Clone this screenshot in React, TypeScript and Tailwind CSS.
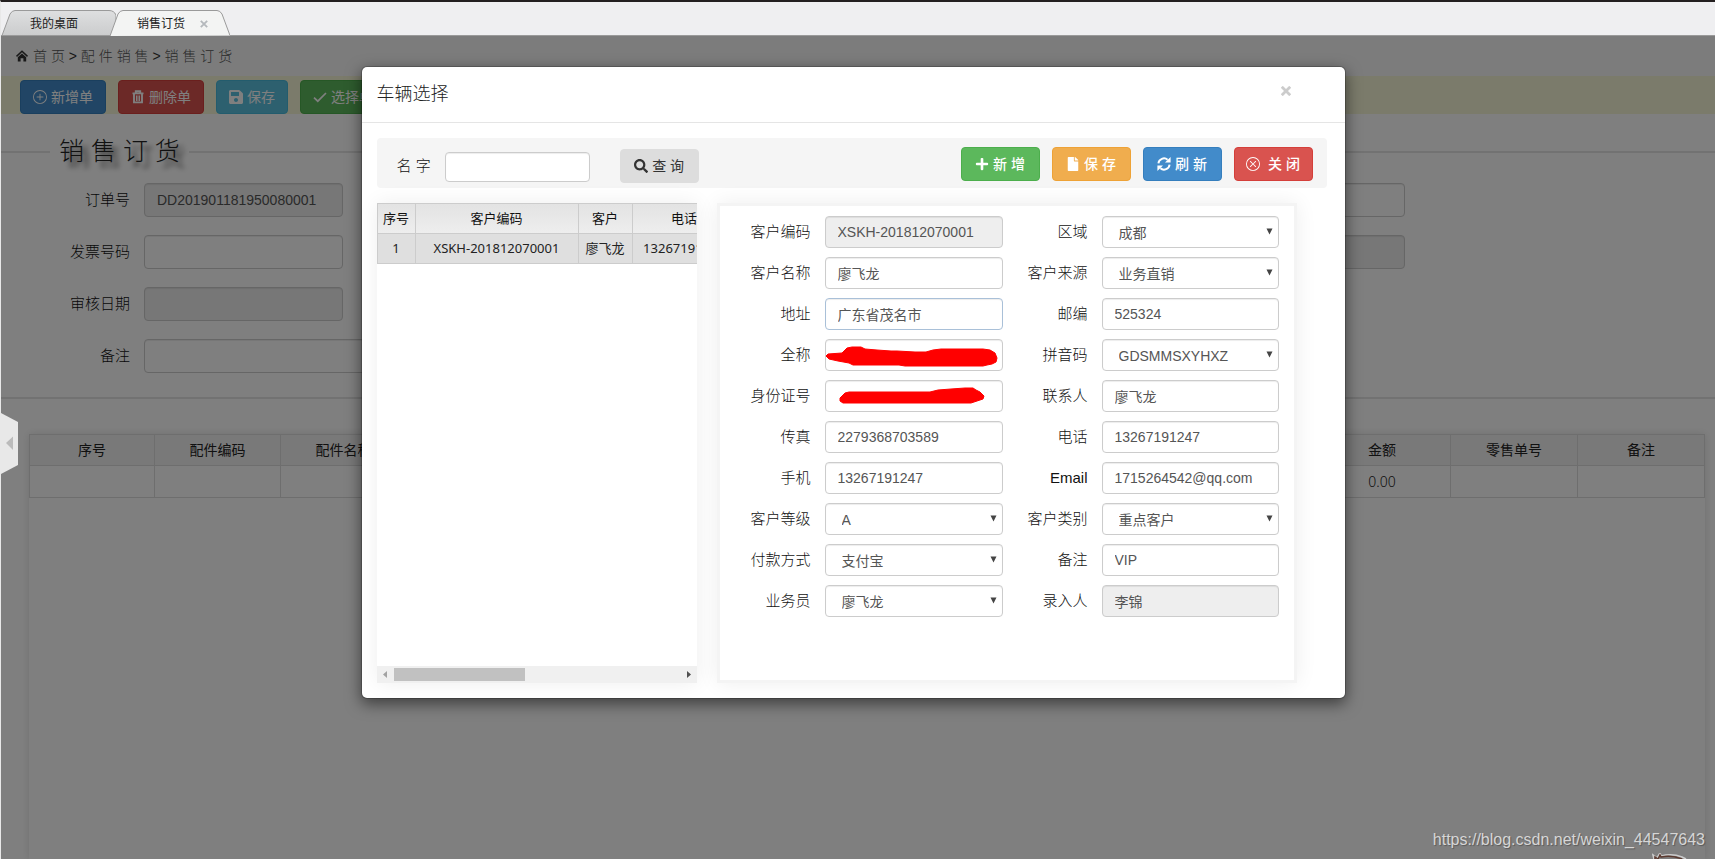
import { type ReactNode, useId } from "react";
import { BsPlusCircle, BsXCircle } from "react-icons/bs";
import { FaPlus, FaFile, FaSave, FaSearch } from "react-icons/fa";

type Field = {
  label: string;
  value: string;
  kind?: "select";
  readOnly?: boolean;
  active?: boolean;
  scribble?: string;
};

const LEFT_FIELDS: Field[] = [
  { label: "客户编码", value: "XSKH-201812070001", readOnly: true },
  { label: "客户名称", value: "廖飞龙" },
  { label: "地址", value: "广东省茂名市", active: true },
  {
    label: "全称",
    value: "",
    scribble:
      "M1 17 L3 15 L17 14 L22 9 L27 8 L36 8 L40 10 L52 11 L66 12 L72 12 L90 13 L101 13 L108 11 L116 10 L158 10 L165 11 L170 14 L172 19 L171 23 L167 25 L162 26 L158 27 L80 27 L74 26 L28 26 L24 24 L13 22 L4 20 Z",
  },
  {
    label: "身份证号",
    value: "",
    scribble:
      "M15 18 L20 13 L24 12 L105 12 L113 10 L126 9 L140 8 L148 8 L151 10 L155 12 L159 16 L158 19 L152 21 L146 23 L18 23 L15 21 Z",
  },
  { label: "传真", value: "2279368703589" },
  { label: "手机", value: "13267191247" },
  { label: "客户等级", value: "A", kind: "select" },
  { label: "付款方式", value: "支付宝", kind: "select" },
  { label: "业务员", value: "廖飞龙", kind: "select" },
];

const RIGHT_FIELDS: Field[] = [
  { label: "区域", value: "成都", kind: "select" },
  { label: "客户来源", value: "业务直销", kind: "select" },
  { label: "邮编", value: "525324" },
  { label: "拼音码", value: "GDSMMSXYHXZ", kind: "select" },
  { label: "联系人", value: "廖飞龙" },
  { label: "电话", value: "13267191247" },
  { label: "Email", value: "1715264542@qq.com" },
  { label: "客户类别", value: "重点客户", kind: "select" },
  { label: "备注", value: "VIP" },
  { label: "录入人", value: "李锦", readOnly: true },
];

function HomeIcon() {
  return (
    <svg viewBox="0 0 12 12" className="h-3 w-3 shrink-0" fill="currentColor" aria-hidden="true">
      <path d="M6 0.2 L12 5.8 L11 6.9 L6 2.3 L1 6.9 L0 5.8 Z" />
      <path d="M6 3.4 L10.2 7.2 V11.6 H7.4 V8.2 H4.6 V11.6 H1.8 V7.2 Z" />
    </svg>
  );
}

function TrashIcon() {
  return (
    <svg viewBox="0 0 14 14" className="h-3.5 w-3.5" fill="none" stroke="currentColor" aria-hidden="true">
      <path d="M1.5 3.4 H12.5 M4.8 3.2 V1.2 H9.2 V3.2 M3 4 V12.4 H11 V4" strokeWidth="1.9" />
      <path d="M5.5 5.5 V11 M7 5.5 V11 M8.5 5.5 V11" strokeWidth="1" />
    </svg>
  );
}

function CheckIcon() {
  return (
    <svg viewBox="0 0 14 14" className="h-3.5 w-3.5" fill="none" stroke="currentColor" strokeWidth="1.7" aria-hidden="true">
      <path d="M1 7.6 L4.8 11.2 L13 3" />
    </svg>
  );
}

function RefreshIcon() {
  return (
    <svg viewBox="0 0 14 14" className="h-3.5 w-3.5" aria-hidden="true">
      <path d="M1.4 6.4 A5.6 5.6 0 0 1 10.6 2.7 M12.6 7.6 A5.6 5.6 0 0 1 3.4 11.3" fill="none" stroke="currentColor" strokeWidth="1.9" />
      <path d="M13.6 0 V5.6 H8 Z M0.4 14 V8.4 H6 Z" fill="currentColor" />
    </svg>
  );
}

function Tabs() {
  return (
    <nav className="flex h-[34px] items-end border-b border-[#9a9a9a] bg-[#efeff1] text-xs font-normal text-[#222]">
      <a href="#desktop" className="relative flex h-[25px] w-[115px] items-center pl-[29px] pt-0.5">
        <svg viewBox="0 0 115 26" className="absolute left-0 top-0 h-[26px] w-[115px]" aria-hidden="true">
          <defs>
            <linearGradient id="tabIdle" x1="0" y1="0" x2="0" y2="1">
              <stop offset="0" stopColor="#dedfe0" />
              <stop offset="1" stopColor="#cbcccd" />
            </linearGradient>
          </defs>
          <path d="M1 25.5 L9 4 Q11 0.5 14 0.5 H108 Q113 0.5 115 5 V25.5 Z" fill="url(#tabIdle)" stroke="#9a9a9a" />
        </svg>
        <span className="relative">我的桌面</span>
      </a>
      <a href="#order" className="relative -ml-1.5 flex h-[25px] w-[120px] items-center gap-[15px] pl-[27px] pt-0.5">
        <svg viewBox="0 0 120 26" className="absolute left-0 top-0 h-[26px] w-[120px]" aria-hidden="true">
          <path d="M0 26 L8 4 Q10 0.5 13 0.5 H107 Q110 0.5 112 4 L120 25.5" fill="#f3f4f3" stroke="#9a9a9a" />
        </svg>
        <span className="relative">销售订货</span>
        <svg viewBox="0 0 8 8" className="relative h-2 w-2" stroke="#b4b8bc" strokeWidth="1.8" aria-hidden="true">
          <path d="M0.8 0.8 L7.2 7.2 M7.2 0.8 L0.8 7.2" />
        </svg>
      </a>
    </nav>
  );
}

function ToolButton({ className, icon, children }: { className: string; icon: ReactNode; children: ReactNode }) {
  return (
    <button type="button" className={`flex h-[34px] shrink-0 items-center gap-1 rounded border px-3 text-sm font-normal text-white ${className}`}>
      {icon}
      <span>{children}</span>
    </button>
  );
}

function OrderField({ label, value = "", readOnly = false, wide = false }: { label: string; value?: string; readOnly?: boolean; wide?: boolean }) {
  const id = useId();
  return (
    <div className={`flex items-center ${wide ? "col-span-2" : ""}`}>
      <label htmlFor={id} className="w-[129px] shrink-0 text-right text-[15px] text-[#111]">
        {label}
      </label>
      <input
        id={id}
        defaultValue={value}
        readOnly={readOnly}
        className={`ml-3.5 h-[34px] rounded border border-[#ccc] px-3 text-sm text-[#555] shadow-[inset_0_1px_1px_rgba(0,0,0,0.075)] ${wide ? "w-full" : "w-[199px]"} ${readOnly ? "bg-[#eee]" : "bg-white"}`}
      />
    </div>
  );
}

function OrderPage() {
  return (
    <div className="flex flex-1 flex-col bg-white">
      <div className="flex h-10 items-center gap-[5px] bg-[#f8f8f8] pl-[15px] text-sm text-[#333]">
        <HomeIcon />
        <span className="text-[#555]">
          首 页 <span className="text-[#333]">&gt;</span> 配 件 销 售 <span className="text-[#333]">&gt;</span> 销 售 订 货
        </span>
      </div>
      <div className="flex items-end gap-3 bg-[#f6f7d7] pl-[19px] pt-1">
        <ToolButton className="border-[#357ebd] bg-[#428bca]" icon={<BsPlusCircle size={14} />}>新增单</ToolButton>
        <ToolButton className="border-[#d43f3a] bg-[#d9534f]" icon={<TrashIcon />}>删除单</ToolButton>
        <ToolButton className="border-[#46b8da] bg-[#5bc0de]" icon={<FaSave size={16} className="-ml-px -mr-px" />}>保存</ToolButton>
        <ToolButton className="border-[#4cae4c] bg-[#5cb85c]" icon={<CheckIcon />}>选择单</ToolButton>
      </div>
      <div className="flex h-[69px] items-center pt-1.5">
        <div className="h-0.5 w-[49px] bg-[#e5e5e5]" />
        <h1 className="px-[9px] text-[25px] text-[#222] [text-shadow:6px_6px_5px_#555]">销 售 订 货</h1>
        <div className="h-0.5 flex-1 bg-[#e5e5e5]" />
      </div>
      <div className="grid grid-cols-[354px_354px_354px_354px] gap-y-[18px] border-b-2 border-[#e5e5e5] pb-6">
        <OrderField label="订单号" value="DD201901181950080001" readOnly />
        <div className="col-span-2" />
        <OrderField label="" />
        <OrderField label="发票号码" />
        <div className="col-span-2" />
        <OrderField label="" readOnly />
        <div className="col-span-4">
          <OrderField label="审核日期" readOnly />
        </div>
        <OrderField label="备注" wide />
      </div>
      <div className="ml-7 mr-2.5 mt-[35px] flex-1 shadow-[0_0_8px_rgba(0,0,0,0.12)]">
        <table className="w-full table-fixed border-collapse text-center text-sm text-[#222]">
          <colgroup>
            <col className="w-[125px]" />
            <col className="w-[126px]" />
            <col className="w-[126px]" />
            <col />
            <col className="w-[137px]" />
            <col className="w-[127px]" />
            <col className="w-[127px]" />
          </colgroup>
          <thead>
            <tr className="h-[31px] bg-[#f2f2f2]">
              {["序号", "配件编码", "配件名称", "", "金额", "零售单号", "备注"].map((name, i) => (
                <th key={i} className="border border-[#ddd] font-normal">{name}</th>
              ))}
            </tr>
          </thead>
          <tbody>
            <tr className="h-8">
              {["", "", "", "", "0.00", "", ""].map((cell, i) => (
                <td key={i} className="border border-[#ddd] font-['Noto_Sans',sans-serif]">{cell}</td>
              ))}
            </tr>
          </tbody>
        </table>
      </div>
    </div>
  );
}

function CustomerField({ field }: { field: Field }) {
  const id = useId();
  const box = "h-8 w-full rounded border text-sm font-normal text-[#555] shadow-[inset_0_1px_1px_rgba(0,0,0,0.075)]";
  return (
    <div className="flex items-center gap-3.5">
      <label htmlFor={id} className="w-[76px] shrink-0 text-right text-[15px] text-[#111]">
        {field.label}
      </label>
      <div className="relative flex-1">
        {field.kind === "select" ? (
          <>
            <select id={id} className={`${box} appearance-none border-[#ccc] bg-white pl-4 pr-6 pt-0.5`}>
              <option>{field.value}</option>
            </select>
            <svg viewBox="0 0 7 7" className="pointer-events-none absolute right-1.5 top-3 h-[7px] w-[7px]" fill="#444" aria-hidden="true">
              <path d="M0.5 0.5 H6.5 L3.5 6.5 Z" />
            </svg>
          </>
        ) : (
          <input
            id={id}
            defaultValue={field.value}
            readOnly={field.readOnly}
            className={`${box} px-3 ${field.active ? "border-[#a9c0d8]" : "border-[#ccc]"} ${field.readOnly ? "bg-[#eee]" : "bg-white"}`}
          />
        )}
        {field.scribble && (
          <svg viewBox="0 0 178 32" className="pointer-events-none absolute left-0 top-0 h-8 w-[178px]" fill="#f00" aria-hidden="true">
            <path d={field.scribble} stroke="#f00" strokeLinejoin="round" />
          </svg>
        )}
      </div>
    </div>
  );
}

function CustomerList() {
  return (
    <div className="flex w-80 shrink-0 flex-col overflow-hidden bg-white">
      <div className="flex-1 overflow-hidden">
        <table className="w-[420px] table-fixed border-collapse text-center text-[#111]">
          <colgroup>
            <col className="w-[38px]" />
            <col className="w-[163px]" />
            <col className="w-[54px]" />
            <col className="w-[104px]" />
            <col />
          </colgroup>
          <thead>
            <tr className="h-[30px] bg-linear-to-b from-[#e3e3e3] to-[#eee] text-[13px]">
              {["序号", "客户编码", "客户", "电话", ""].map((name, i) => (
                <th key={i} className="border border-[#ccc] p-0 font-normal">{name}</th>
              ))}
            </tr>
          </thead>
          <tbody>
            <tr className="h-[30px] bg-[#dfdfdf] font-['Noto_Sans','Noto_Sans_CJK_SC',sans-serif] text-[13px] text-[#222]">
              {["1", "XSKH-201812070001", "廖飞龙", "13267191247", ""].map((cell, i) => (
                <td key={i} className="border border-[#ccc] p-0 font-normal">{cell}</td>
              ))}
            </tr>
          </tbody>
        </table>
      </div>
      <div className="flex h-[17px] items-center bg-[#f0f0f0]">
        <svg viewBox="0 0 17 17" className="h-[17px] w-[17px]" fill="#a3a3a3" aria-hidden="true">
          <path d="M6 8.5 L10 5 V12 Z" />
        </svg>
        <div className="h-[13px] w-[131px] bg-[#c1c1c1]" />
        <svg viewBox="0 0 17 17" className="ml-auto h-[17px] w-[17px]" fill="#505050" aria-hidden="true">
          <path d="M11 8.5 L7 5 V12 Z" />
        </svg>
      </div>
    </div>
  );
}

function ActionButton({ className, icon, children }: { className: string; icon: ReactNode; children: ReactNode }) {
  return (
    <button type="button" className={`flex h-[34px] w-[79px] items-center justify-center gap-1 whitespace-nowrap rounded border text-sm ${className}`}>
      {icon}
      <span>{children}</span>
    </button>
  );
}

function CustomerDialog() {
  return (
    <section role="dialog" aria-label="车辆选择" className="w-[985px] rounded-md border border-black/20 bg-white bg-clip-padding shadow-[0_5px_15px_rgba(0,0,0,0.5)]">
      <header className="flex h-14 items-start justify-between border-b border-[#e5e5e5] pl-[15px] pr-[54px] pt-[13px]">
        <h2 className="text-lg text-[#222]">车辆选择</h2>
        <button type="button" aria-label="关闭窗口" className="mt-1.5 text-[#ccc]">
          <svg viewBox="0 0 10 10" className="h-2.5 w-2.5" stroke="currentColor" strokeWidth="2.8" aria-hidden="true">
            <path d="M0.8 0.8 L9.2 9.2 M9.2 0.8 L0.8 9.2" />
          </svg>
        </button>
      </header>
      <div className="p-[15px]">
        <div className="mr-[3px] flex h-[50px] items-start rounded bg-[#f5f5f5] pl-5 pr-3.5">
          <label htmlFor="query-name" className="mt-[17px] text-[15px] text-[#111]">名 字</label>
          <input id="query-name" className="ml-3.5 mt-3.5 h-[30px] w-[145px] rounded border border-[#ccc] bg-white px-2 text-sm shadow-[inset_0_1px_1px_rgba(0,0,0,0.075)]" />
          <div className="ml-[30px] mt-[11px]">
            <ActionButton className="border-[#ddd] bg-[#ddd] font-normal text-[#333]" icon={<FaSearch size={14} />}>查 询</ActionButton>
          </div>
          <div className="ml-auto mt-[9px] flex gap-3">
            <ActionButton className="border-[#4cae4c] bg-[#5cb85c] font-medium text-white" icon={<FaPlus size={14} />}>新 增</ActionButton>
            <ActionButton className="border-[#eea236] bg-[#f0ad4e] font-medium text-white" icon={<FaFile size={14} />}>保 存</ActionButton>
            <ActionButton className="border-[#357ebd] bg-[#428bca] font-medium text-white" icon={<RefreshIcon />}>刷 新</ActionButton>
            <ActionButton className="border-[#d43f3a] bg-[#d9534f] font-medium text-white" icon={<BsXCircle size={14} />}>&nbsp;关 闭</ActionButton>
          </div>
        </div>
        <div className="mt-[15px] flex h-[480px] gap-5">
          <div className="flex shadow-[0_0_20px_rgba(0,0,0,0.07)]">
            <CustomerList />
          </div>
          <div className="mr-[33px] grid flex-1 grid-cols-[268px_1fr] content-start gap-x-[9px] border-[3px] border-[#f4f4f4] bg-white pl-[15px] pr-[15px] pt-2.5 shadow-[0_0_20px_rgba(0,0,0,0.07)]">
            <div className="flex flex-col gap-[9px]">
              {LEFT_FIELDS.map((field) => (
                <CustomerField key={field.label} field={field} />
              ))}
            </div>
            <div className="flex flex-col gap-[9px]">
              {RIGHT_FIELDS.map((field) => (
                <CustomerField key={field.label} field={field} />
              ))}
            </div>
          </div>
        </div>
      </div>
    </section>
  );
}

export default function App() {
  return (
    <div className="flex min-h-screen flex-col border-t-2 border-t-[#231f20] border-l border-l-[#e8e8e8] bg-white font-['Liberation_Sans','Noto_Sans_CJK_SC',sans-serif] font-light">
      <Tabs />
      <main className="relative flex flex-1 flex-col overflow-hidden">
        <OrderPage />
        <div className="absolute inset-0 flex items-start justify-center bg-black/50 pr-2.5 pt-[30px]">
          <CustomerDialog />
        </div>
        <button type="button" aria-label="收起侧栏" className="absolute left-0 top-[377px] h-[61px] w-[17px]">
          <svg viewBox="0 0 17 61" className="h-[61px] w-[17px]" aria-hidden="true">
            <path d="M0 0 L17 9 V52 L0 61 Z" fill="#e8e8e8" />
            <path d="M5 30 L12 23.5 V37 Z" fill="#bbb" />
          </svg>
        </button>
        <div className="absolute bottom-[7px] right-2.5 text-base text-[#d6d6d6] [text-shadow:1px_1px_1px_rgba(0,0,0,0.3)]">
          https://blog.csdn.net/weixin_44547643
        </div>
        <svg viewBox="0 0 40 6" className="absolute bottom-0 right-[23px] h-1.5 w-10" fill="none" aria-hidden="true">
          <path d="M2 6 L1 2 L5 5 L8 0 L9 3 Q20 0 30 4 L34 6" stroke="#ccc" strokeWidth="1.6" />
          <path d="M3 6 L3 4 L6 6 L8 2 L9 4 Q20 2 30 6" stroke="#5b3a30" strokeWidth="1.5" />
        </svg>
      </main>
    </div>
  );
}
